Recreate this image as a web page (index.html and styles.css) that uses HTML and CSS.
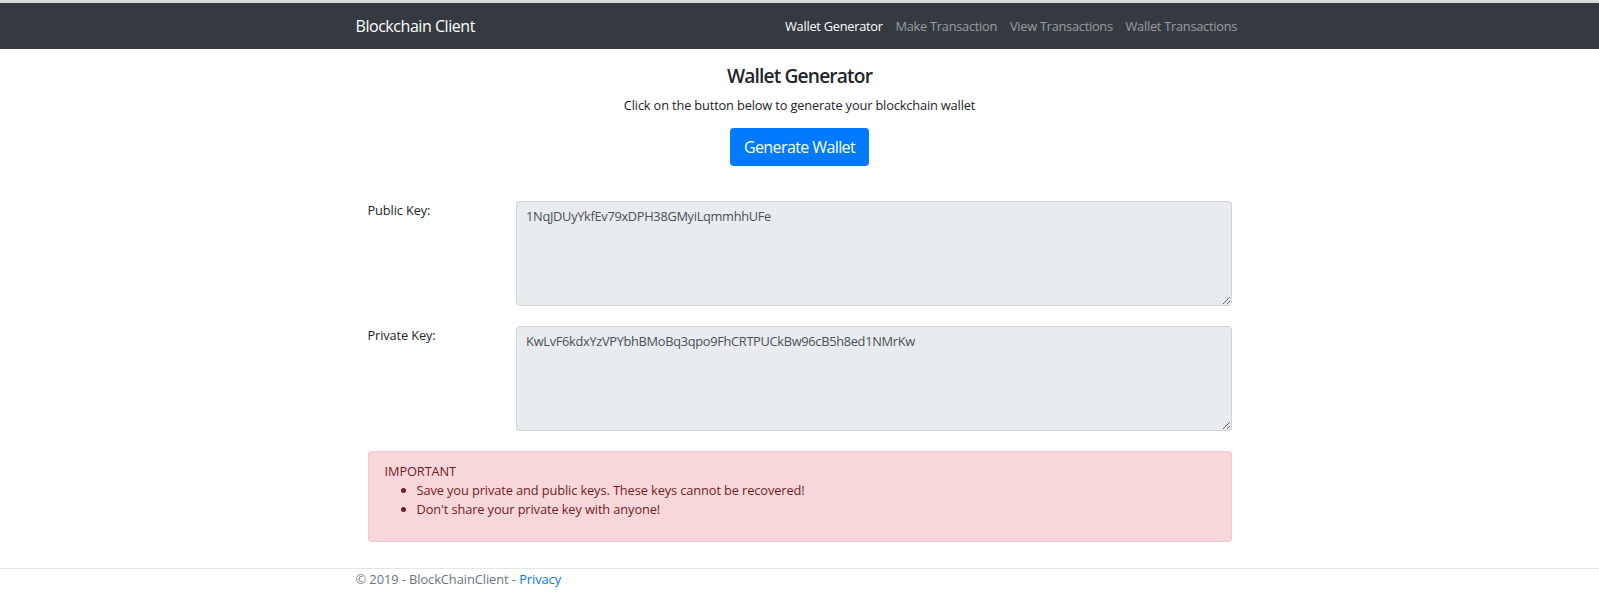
FILE: index.html
```html
<!DOCTYPE html>
<html lang="en">
<head>
<meta charset="utf-8">
<title>Wallet Generator - Blockchain Client</title>
<link rel="stylesheet" href="styles.css">
</head>
<body>
<header class="topbar">
  <nav class="navbar">
    <div class="container nav-inner">
      <a class="brand" href="#">Blockchain Client</a>
      <ul class="nav-links">
        <li><a class="nav-link active" href="#">Wallet Generator</a></li>
        <li><a class="nav-link" href="#">Make Transaction</a></li>
        <li><a class="nav-link" href="#">View Transactions</a></li>
        <li><a class="nav-link" href="#">Wallet Transactions</a></li>
      </ul>
    </div>
  </nav>
</header>

<main class="container main">
  <div class="content">
    <section class="intro">
      <h4 class="title">Wallet Generator</h4>
      <p class="lead-text">Click on the button below to generate your blockchain wallet</p>
      <button class="btn-primary" type="button">Generate Wallet</button>
    </section>

    <form class="keys">
      <div class="key-row">
        <label class="key-label" for="pub">Public Key:</label>
        <div class="key-field">
          <textarea id="pub" class="key-input" readonly>1NqJDUyYkfEv79xDPH38GMyiLqmmhhUFe</textarea>
        </div>
      </div>
      <div class="key-row">
        <label class="key-label" for="priv">Private Key:</label>
        <div class="key-field">
          <textarea id="priv" class="key-input" readonly>KwLvF6kdxYzVPYbhBMoBq3qpo9FhCRTPUCkBw96cB5h8ed1NMrKw</textarea>
        </div>
      </div>
    </form>

    <div class="alert">
      IMPORTANT
      <ul class="alert-list">
        <li>Save you private and public keys. These keys cannot be recovered!</li>
        <li>Don't share your private key with anyone!</li>
      </ul>
    </div>
  </div>
</main>

<footer class="footer">
  <div class="container footer-inner">
    &copy; 2019 - BlockChainClient - <a class="footer-link" href="#">Privacy</a>
  </div>
</footer>
</body>
</html>
```

FILE: styles.css
```css
* {
  box-sizing: border-box;
}

html, body {
  margin: 0;
  padding: 0;
}

body {
  font-family: "Open Sans", "Noto Sans", "Liberation Sans", sans-serif;
  font-size: 12.8px;
  line-height: 1.5;
  color: #212529;
  background: #fff;
  letter-spacing: -0.12px;
}

.container {
  width: 100%;
  max-width: 912px;
  margin: 0 auto;
  padding: 0 12px;
}

/* Navbar */
.topbar {
  border-top: 3px solid #dcdcdc;
}

.navbar {
  background: #343a40;
  height: 46px;
  display: flex;
  align-items: center;
}

.nav-inner {
  display: flex;
  align-items: center;
  justify-content: space-between;
}

.brand {
  color: #fff;
  text-decoration: none;
  font-size: 16px;
  line-height: 24px;
  padding: 4px 0;
  letter-spacing: -0.45px;
}

.nav-links {
  list-style: none;
  display: flex;
  margin: 2px 0 0;
  padding: 0;
}

.nav-link {
  display: block;
  padding: 6.4px 6.4px;
  color: rgba(255, 255, 255, 0.5);
  text-decoration: none;
  line-height: 19.2px;
  letter-spacing: -0.26px;
}

.nav-link.active {
  color: #fff;
}

/* Main */
.main {
  padding-top: 15px;
}

.content {
  padding: 0 12px;
}

.intro {
  text-align: center;
}

.title {
  margin: 0 0 9.4px;
  font-size: 19.2px;
  line-height: 23px;
  font-weight: 600;
  letter-spacing: -0.85px;
}

.lead-text {
  margin: 0 0 12px;
  line-height: 19.2px;
  letter-spacing: -0.15px;
}

.btn-primary {
  font-family: inherit;
  font-size: 16px;
  line-height: 24px;
  padding: 6px 12.8px;
  color: #fff;
  background: #007bff;
  border: 1px solid #007bff;
  border-radius: 3.2px;
  letter-spacing: -0.6px;
  cursor: pointer;
}

/* Key form */
.keys {
  margin: 35.5px -12px 0;
}

.key-row {
  display: flex;
  margin-bottom: 20px;
}

.key-label {
  flex: 0 0 148px;
  padding: 0 12px;
  line-height: 19.2px;
}

.key-field {
  flex: 1 1 auto;
  padding: 0 12px;
}

.key-input {
  display: block;
  width: 100%;
  height: 105px;
  padding: 4.8px 9.6px;
  font-family: inherit;
  font-size: 12.8px;
  line-height: 19.2px;
  color: #495057;
  background: #e9ecef;
  border: 1px solid #ced4da;
  border-radius: 3.2px;
  letter-spacing: -0.3px;
  resize: vertical;
}

/* Alert */
.alert {
  padding: 9.6px 16px;
  color: #721c24;
  background: #f8d7da;
  border: 1px solid #f5c6cb;
  border-radius: 3.2px;
  line-height: 19.2px;
  letter-spacing: -0.1px;
}

.alert-list {
  margin: 0 0 12px;
  padding-left: 32px;
}

/* Footer */
.footer {
  margin-top: 26px;
  border-top: 1px solid #e5e5e5;
  color: #6c757d;
  line-height: 19.2px;
  padding-top: 1px;
  letter-spacing: -0.05px;
}

.footer-link {
  color: #007bff;
  text-decoration: none;
}
```
